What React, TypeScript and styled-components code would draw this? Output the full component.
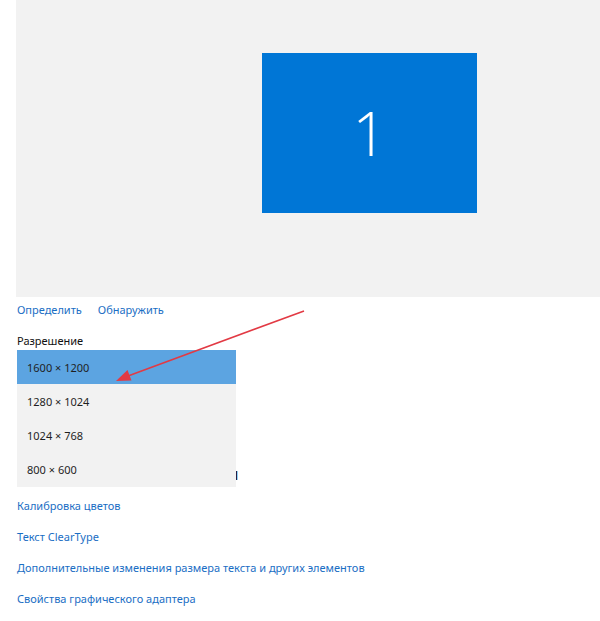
import styled, { createGlobalStyle } from "styled-components";

const GlobalStyle = createGlobalStyle`
  html, body {
    margin: 0;
    padding: 0;
    background: #ffffff;
  }
  body {
    font-family: "Noto Sans", "Open Sans", sans-serif;
    color: #1f1f1f;
  }
`;

const Page = styled.div`
  position: relative;
  width: 600px;
  height: 621px;
  overflow: hidden;
`;

const Canvas = styled.div`
  margin-left: 16px;
  height: 297px;
  background: #f2f2f2;
  box-sizing: border-box;
  padding: 53px 0 0 246px;
`;

const Monitor = styled.div`
  width: 215px;
  height: 160px;
  background: #0076d6;
  display: flex;
  align-items: center;
  justify-content: center;
  color: #ffffff;
  font-family: "Open Sans", "Noto Sans", sans-serif;
  font-weight: 300;
  font-size: 60px;
`;

const Content = styled.div`
  padding-left: 17px;
`;

const LinkRow = styled.div`
  display: flex;
  gap: 16px;
  margin-top: 3px;
`;

const Link = styled.a`
  display: block;
  font-size: 11px;
  line-height: 20px;
  color: #1a6ec4;
  text-decoration: none;
  cursor: pointer;
`;

const Label = styled.div`
  margin-top: 11px;
  font-size: 11px;
  line-height: 20px;
  color: #111;
`;

const SelectWrap = styled.div`
  position: relative;
  width: 219px;
  height: 32px;
`;

const Dropdown = styled.ul`
  position: absolute;
  top: -1px;
  left: 0;
  width: 219px;
  margin: 0;
  padding: 0 0 1px;
  list-style: none;
  background: #f2f2f2;
  z-index: 2;
`;

const Option = styled.li<{ $selected?: boolean }>`
  height: 34px;
  display: flex;
  align-items: center;
  padding-left: 10px;
  font-size: 11px;
  color: #1f1f1f;
  background: ${(p) => (p.$selected ? "#5ca4e1" : "transparent")};
`;

const Heading = styled.div`
  margin-top: 79px;
  font-size: 16.5px;
  line-height: 24px;
  color: #111;
`;

const LinkList = styled.div`
  margin-top: 10px;
  display: flex;
  flex-direction: column;
  gap: 11px;
`;

const Overlay = styled.svg`
  position: absolute;
  inset: 0;
  pointer-events: none;
  z-index: 5;
`;

const resolutions = ["1600 × 1200", "1280 × 1024", "1024 × 768", "800 × 600"];

const related = [
  "Калибровка цветов",
  "Текст ClearType",
  "Дополнительные изменения размера текста и других элементов",
  "Свойства графического адаптера",
];

export default function App() {
  return (
    <Page>
      <GlobalStyle />
      <Canvas>
        <Monitor>1</Monitor>
      </Canvas>
      <Content>
        <LinkRow>
          <Link>Определить</Link>
          <Link>Обнаружить</Link>
        </LinkRow>
        <Label>Разрешение</Label>
        <SelectWrap>
          <Dropdown>
            {resolutions.map((r, i) => (
              <Option key={r} $selected={i === 0}>
                {r}
              </Option>
            ))}
          </Dropdown>
        </SelectWrap>
        <Heading>Сопутствующие параметры</Heading>
        <LinkList>
          {related.map((l) => (
            <Link key={l}>{l}</Link>
          ))}
        </LinkList>
      </Content>
      <Overlay width="600" height="621" viewBox="0 0 600 621">
        <line x1="304" y1="311" x2="128" y2="376" stroke="#e23a44" strokeWidth="1.6" />
        <polygon points="116,381 131.5,380.5 127.5,370" fill="#e23a44" />
      </Overlay>
    </Page>
  );
}
